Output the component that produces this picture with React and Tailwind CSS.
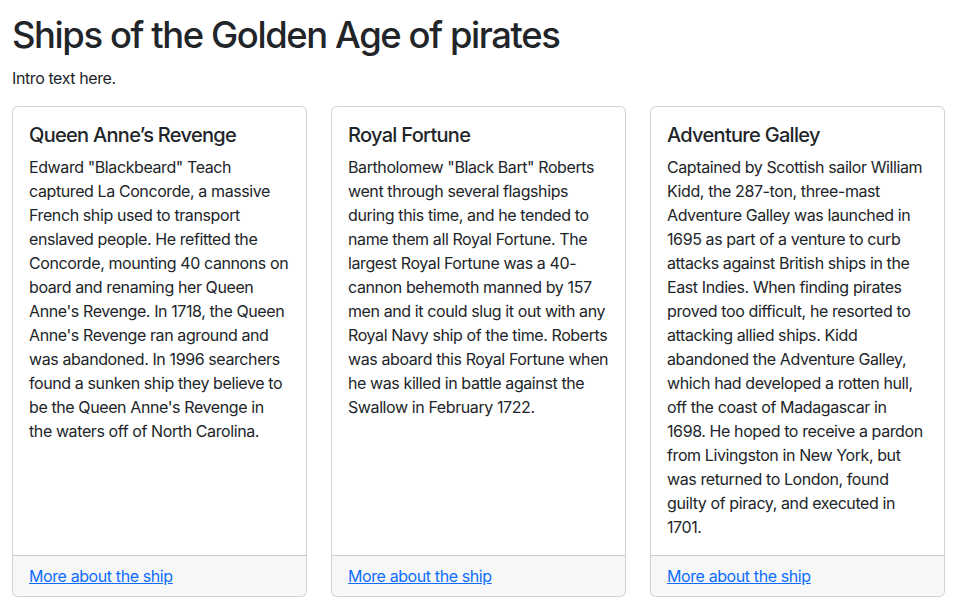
const SHIPS = [
  {
    name: "Queen Anne’s Revenge",
    text: "Edward \"Blackbeard\" Teach captured La Concorde, a massive French ship used to transport enslaved people. He refitted the Concorde, mounting 40 cannons on board and renaming her Queen Anne's Revenge. In 1718, the Queen Anne's Revenge ran aground and was abandoned. In 1996 searchers found a sunken ship they believe to be the Queen Anne's Revenge in the waters off of North Carolina.",
  },
  {
    name: "Royal Fortune",
    text: "Bartholomew \"Black Bart\" Roberts went through several flagships during this time, and he tended to name them all Royal Fortune. The largest Royal Fortune was a 40-cannon behemoth manned by 157 men and it could slug it out with any Royal Navy ship of the time. Roberts was aboard this Royal Fortune when he was killed in battle against the Swallow in February 1722.",
  },
  {
    name: "Adventure Galley",
    text: "Captained by Scottish sailor William Kidd, the 287-ton, three-mast Adventure Galley was launched in 1695 as part of a venture to curb attacks against British ships in the East Indies. When finding pirates proved too difficult, he resorted to attacking allied ships. Kidd abandoned the Adventure Galley, which had developed a rotten hull, off the coast of Madagascar in 1698. He hoped to receive a pardon from Livingston in New York, but was returned to London, found guilty of piracy, and executed in 1701.",
  },
]

function ShipCard({ ship }) {
  return (
    <div className="flex flex-col rounded-md border border-black/[0.175] bg-white">
      <div className="flex-1 p-4">
        <h5 className="mb-2 text-[20px] font-medium leading-[1.2] tracking-[-0.7px]">{ship.name}</h5>
        <p>{ship.text}</p>
      </div>
      <div className="rounded-b-md border-t border-black/[0.175] bg-[#f7f7f7] px-4 py-2">
        <a href="#" className="text-[#0d6efd] underline">More about the ship</a>
      </div>
    </div>
  )
}

export default function App() {
  return (
    <div
      className="min-h-screen bg-white px-3 pt-[14px] text-[16px] leading-6 tracking-[-0.4px] text-[#212529]"
      style={{ fontFamily: "Inter, 'Liberation Sans', sans-serif" }}
    >
      <h1 className="mb-2 text-[36.4px] font-medium leading-[1.2] tracking-[-1.4px]">Ships of the Golden Age of pirates</h1>
      <p className="mb-4">Intro text here.</p>
      <div className="grid grid-cols-3 gap-6">
        {SHIPS.map(s => <ShipCard key={s.name} ship={s} />)}
      </div>
    </div>
  )
}
